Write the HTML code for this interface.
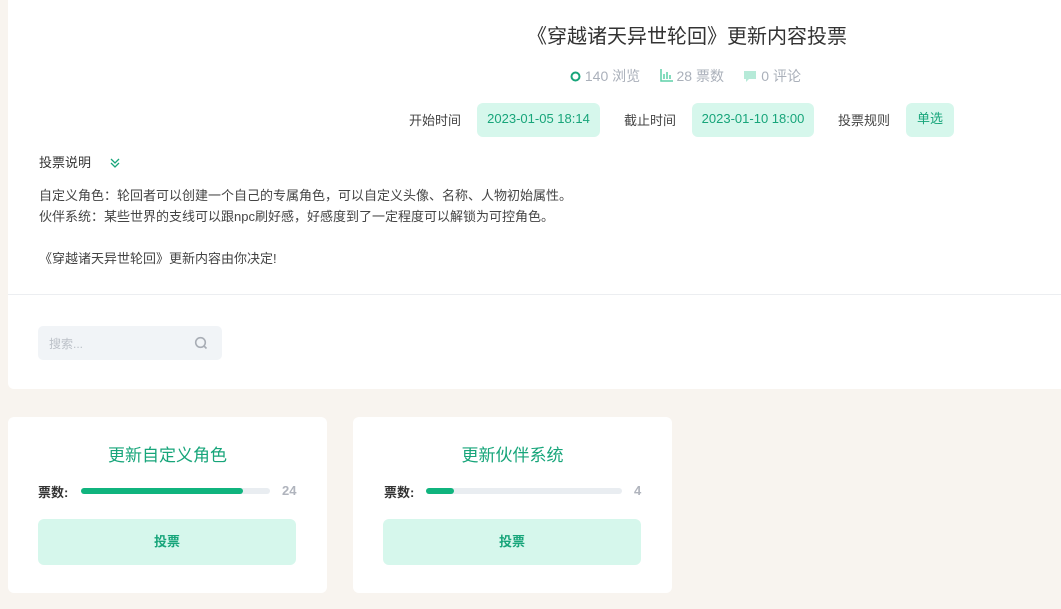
<!DOCTYPE html>
<html><head><meta charset="utf-8"><style>
*{margin:0;padding:0;box-sizing:border-box}
body{width:1061px;height:609px;background:#f8f4ef;font-family:"Liberation Sans","Noto Sans CJK SC",sans-serif;position:relative;overflow:hidden;color:#333}
.main{position:absolute;left:8px;top:0;width:1060px;height:389px;background:#fff;border-radius:0 0 0 6px}
.abs{position:absolute;white-space:nowrap}
.title{top:20px;font-size:20px;color:#333}
.stats{top:66px;font-size:14px;color:#aab0ba}
.lbl{font-size:13px;color:#444;top:110px}
.tag{top:103px;height:34px;line-height:32px;background:#d6f7ec;color:#17a57a;font-size:13px;border-radius:6px;text-align:center}
.desc{font-size:13px;color:#444}
.card{position:absolute;top:417px;width:319px;height:176px;background:#fff;border-radius:6px}
.card h3{position:absolute;top:24px;left:0;width:100%;text-align:center;font-weight:normal;font-size:17px;color:#17a57a}
.card .k{position:absolute;left:30px;top:65px;font-size:13px;font-weight:bold;color:#333}
.bar{position:absolute;left:73px;top:71px;width:189px;height:6px;border-radius:3px;background:#e9edf1}
.bar i{display:block;height:6px;border-radius:3px;background:#10b47e}
.card .n{position:absolute;left:274px;top:66px;font-size:13px;font-weight:bold;color:#b0b4bd}
.btn{position:absolute;left:30px;top:102px;width:258px;height:46px;border-radius:6px;background:#d6f7ec;color:#17a57a;font-weight:bold;font-size:13px;text-align:center;line-height:46px}
</style></head><body>
<div class="main">
<div class="abs title" style="left:519px">《穿越诸天异世轮回》更新内容投票</div>
<div class="abs stats" style="left:562px">
<svg width="11" height="11" style="vertical-align:-1px"><circle cx="5.5" cy="5.5" r="4" fill="none" stroke="#17a57a" stroke-width="2"/></svg> 140 浏览&nbsp;&nbsp;&nbsp;&nbsp;
<svg width="13" height="13" style="vertical-align:-1px"><path d="M1 0V12H13M4 10V5M7 10V3M10 10V6" stroke="#5fd1a8" stroke-width="1.5" fill="none"/></svg> 28 票数&nbsp;&nbsp;&nbsp;&nbsp;
<svg width="14" height="13" style="vertical-align:-2px"><path d="M1 1H13V9H6L3 12V9H1Z" fill="#b6ead8"/></svg> 0 评论</div>
<div class="abs lbl" style="left:401px">开始时间</div>
<div class="abs tag" style="left:469px;width:123px">2023-01-05 18:14</div>
<div class="abs lbl" style="left:616px">截止时间</div>
<div class="abs tag" style="left:684px;width:122px">2023-01-10 18:00</div>
<div class="abs lbl" style="left:830px">投票规则</div>
<div class="abs tag" style="left:898px;width:48px">单选</div>
<div class="abs" style="left:31px;top:152px;font-size:13px;color:#333">投票说明</div>
<svg class="abs" style="left:101px;top:157px" width="12" height="12"><path d="M2 2L6 6L10 2M2 6L6 10L10 6" stroke="#17a57a" stroke-width="1.3" fill="none"/></svg>
<div class="abs desc" style="left:31px;top:185px">自定义角色：轮回者可以创建一个自己的专属角色，可以自定义头像、名称、人物初始属性。</div>
<div class="abs desc" style="left:31px;top:206px">伙伴系统：某些世界的支线可以跟npc刷好感，好感度到了一定程度可以解锁为可控角色。</div>
<div class="abs desc" style="left:31px;top:248px">《穿越诸天异世轮回》更新内容由你决定!</div>
<div class="abs" style="left:0;top:294px;width:1060px;height:1px;background:#eceef1"></div>
<div class="abs" style="left:30px;top:326px;width:184px;height:34px;border-radius:5px;background:#f1f4f7">
<span style="position:absolute;left:11px;top:9px;font-size:12px;color:#bcc1c8">搜索...</span>
<svg style="position:absolute;left:156px;top:10px" width="14" height="14"><circle cx="6.5" cy="6.5" r="4.8" fill="none" stroke="#a8adb5" stroke-width="1.6"/><path d="M10 10L12.5 12.5" stroke="#a8adb5" stroke-width="1.6"/></svg>
</div>
</div>
<div class="card" style="left:8px"><h3>更新自定义角色</h3><div class="k">票数:</div><div class="bar"><i style="width:162px"></i></div><div class="n">24</div><div class="btn">投票</div></div>
<div class="card" style="left:353px"><h3>更新伙伴系统</h3><div class="k" style="left:31px">票数:</div><div class="bar" style="width:196px"><i style="width:28px"></i></div><div class="n" style="left:281px">4</div><div class="btn">投票</div></div>
</body></html>
